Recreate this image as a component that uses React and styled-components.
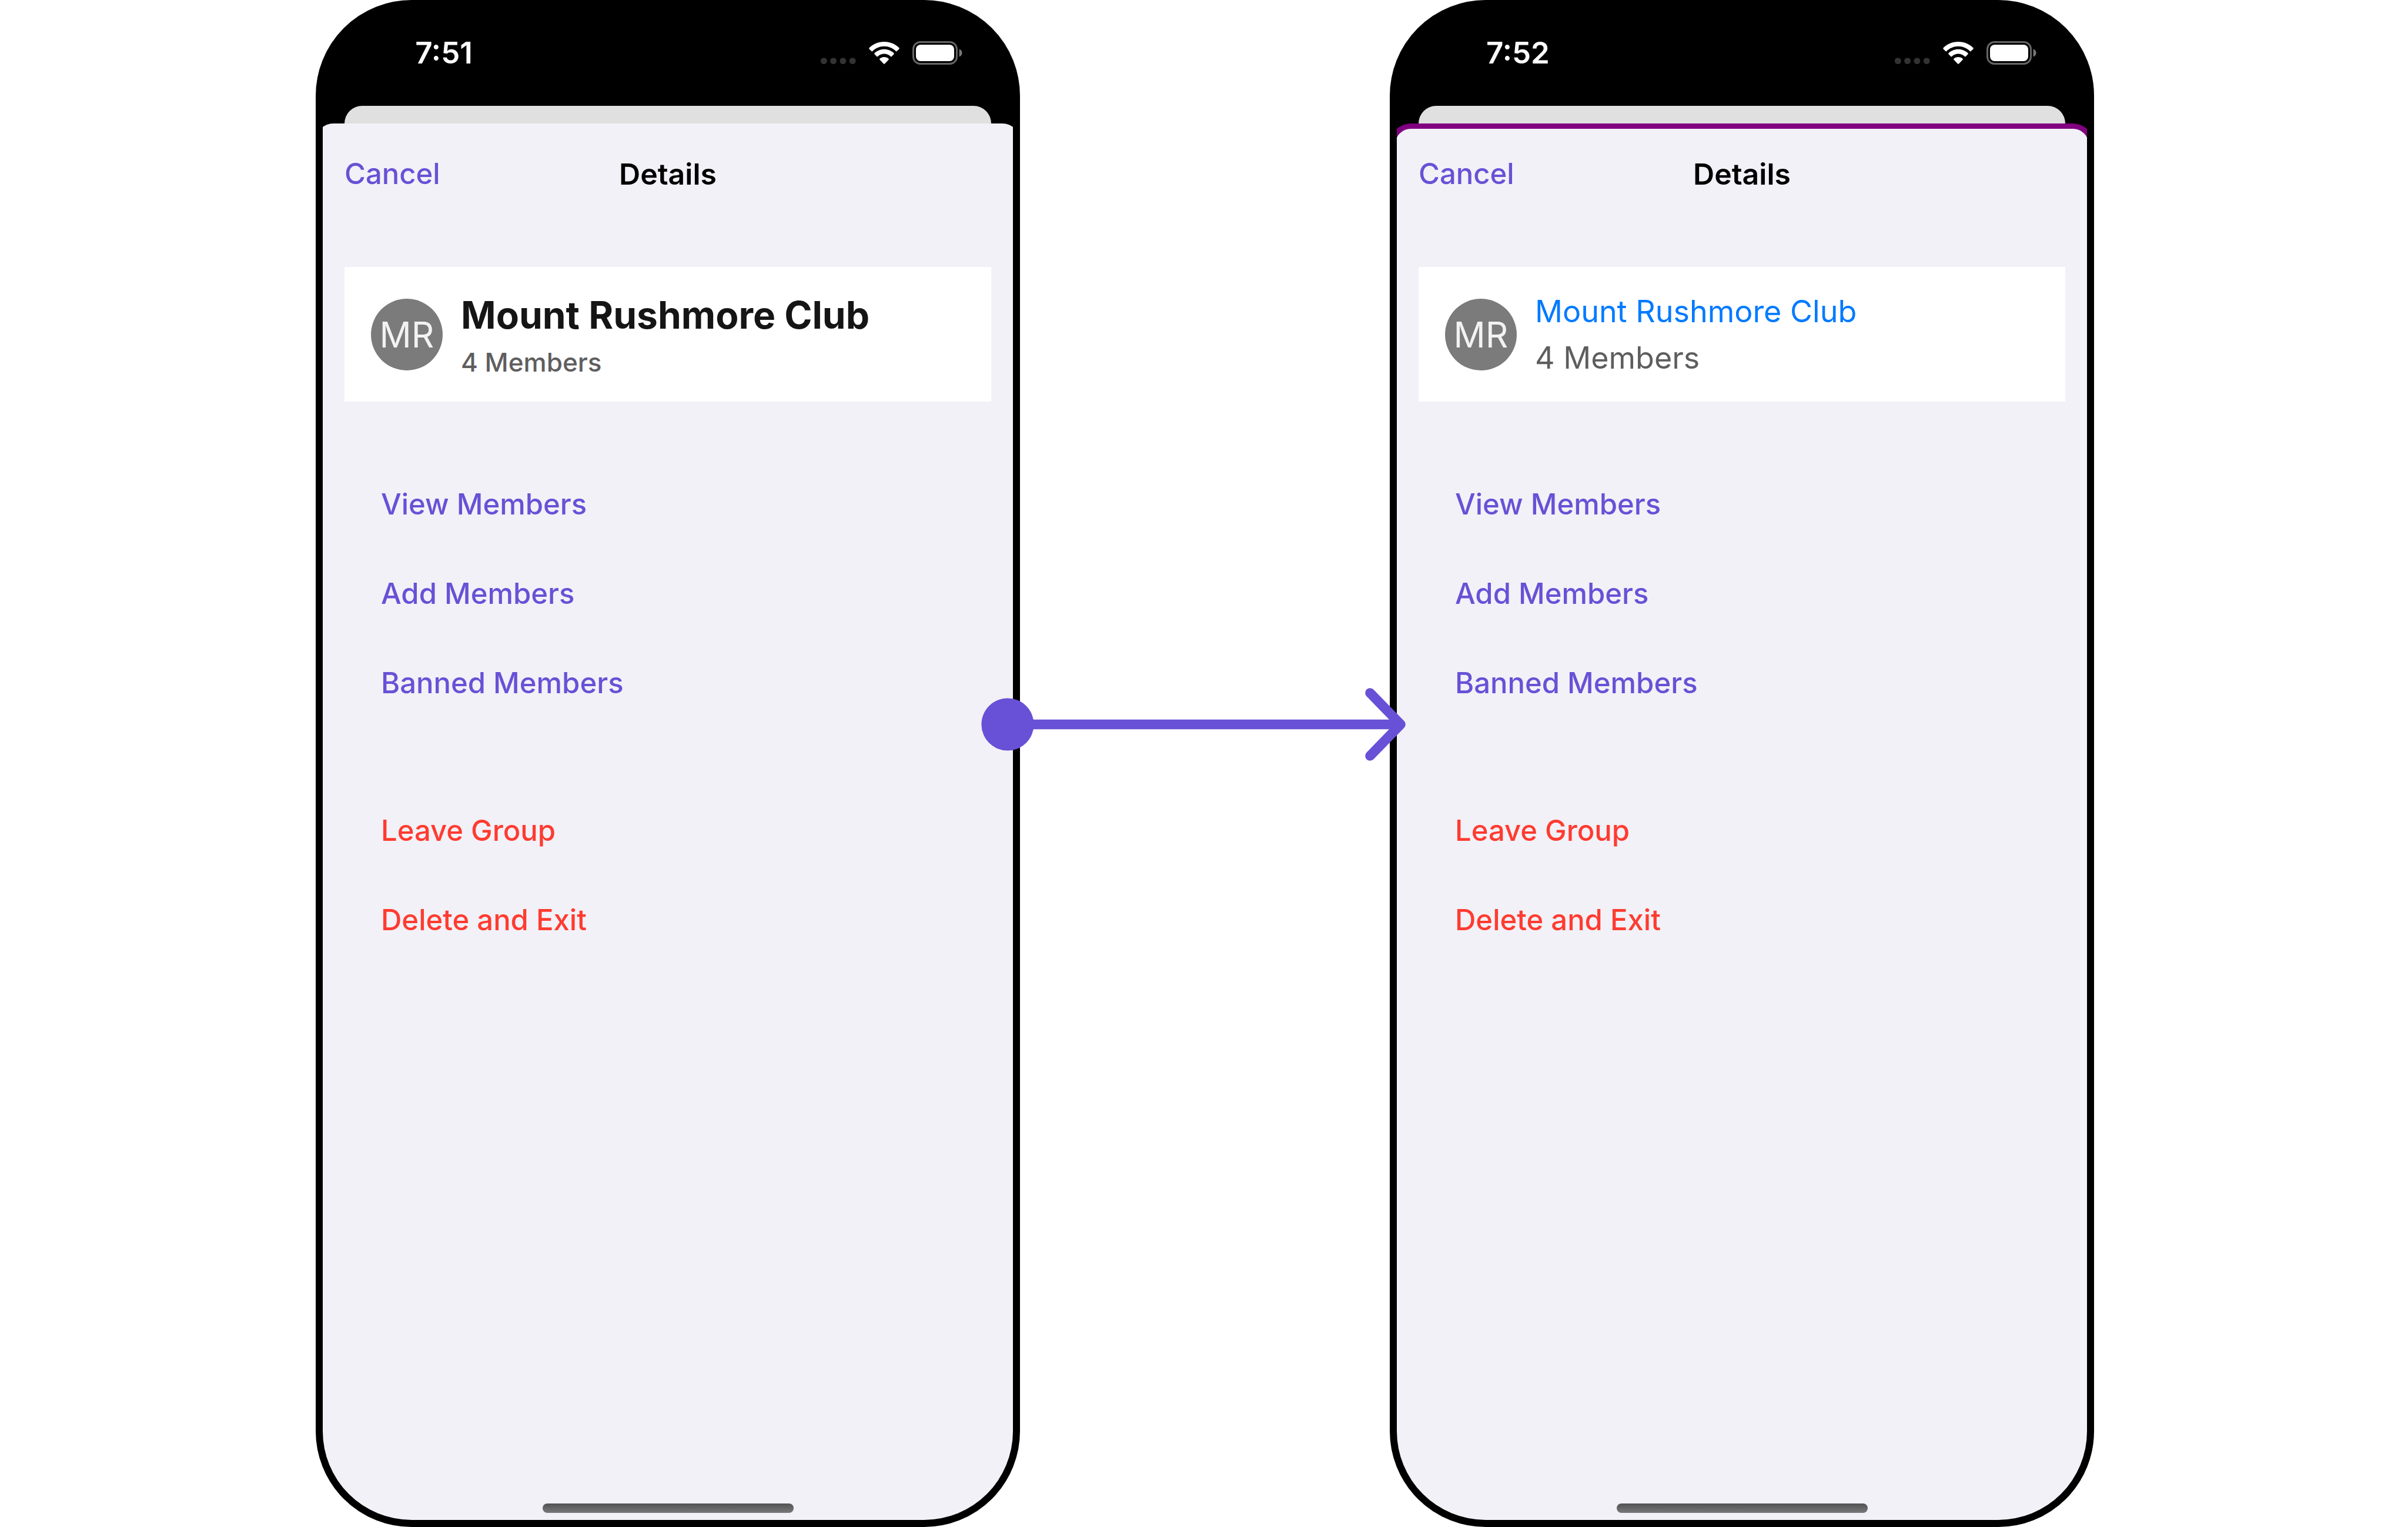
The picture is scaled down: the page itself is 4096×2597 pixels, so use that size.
import React from "react";
import styled, { createGlobalStyle } from "styled-components";

const color = {
  accent: "#6851d6",
  danger: "#ff3b30",
  link: "#007aff",
  sheet: "#f2f1f7",
  behind: "#e0e0e0",
  outline: "#800080",
};

const GlobalStyle = createGlobalStyle`
  *, *::before, *::after { box-sizing: border-box; }
  body {
    margin: 0;
    background: #fff;
    font-family: Inter, "Liberation Sans", sans-serif;
  }
  h1, h2, p, ul { margin: 0; padding: 0; }
`;

const Stage = styled.main`
  display: grid;
  grid-template-columns: minmax(0, 1fr) 629px minmax(0, 1fr);
  min-height: 100vh;
  padding: 0 534px 0 537px;
`;

const PhoneFrame = styled.section`
  display: flex;
  flex-direction: column;
  border: 12px solid #000;
  border-radius: 163px;
  background: #000;
  overflow: hidden;
`;

const StatusBar = styled.div`
  display: flex;
  align-items: center;
  justify-content: space-between;
  height: 168px;
  padding: 0 86px 13px 0;
`;

const Time = styled.time`
  width: 412px;
  text-align: center;
  color: #fff;
  font-size: 51px;
  font-weight: 600;
  line-height: 60px;
`;

const StatusIcons = styled.div`
  display: flex;
  align-items: center;
  gap: 22px;

  svg { display: block; }
`;

const BehindCard = styled.div`
  height: 30px;
  margin: 0 37px;
  border-radius: 30px 30px 0 0;
  background: ${color.behind};
`;

/* The sheet runs under the bezel on both sides, so only part of its corners shows. */
const Sheet = styled.div`
  flex: 1;
  display: flex;
  flex-direction: column;
  margin: 0 -12px;
  padding: 0 40px 12px;
  border: 9px solid ${(p) => (p.$outlined ? color.outline : color.sheet)};
  border-bottom: 0;
  border-radius: ${(p) => (p.$outlined ? "36px 36px 0 0" : "30px 30px 0 0")};
  background: ${color.sheet};
`;

const NavBar = styled.header`
  display: grid;
  grid-template-columns: 1fr auto 1fr;
  align-items: center;
  height: 154px;
  margin-bottom: 81px;
`;

const TextButton = styled.button`
  border: 0;
  padding: 0;
  background: none;
  font: inherit;
  font-size: 49px;
  font-weight: 500;
  line-height: 60px;
  text-align: left;
  cursor: pointer;
  color: ${(p) => (p.$danger ? color.danger : color.accent)};
`;

const NavTitle = styled.h1`
  font-size: 50px;
  font-weight: 600;
  line-height: 60px;
  color: #000;
`;

const GroupCard = styled.div`
  display: flex;
  align-items: center;
  gap: 31px;
  height: 229px;
  padding: 0 45px;
  background: #fff;
`;

const Avatar = styled.div`
  display: grid;
  place-items: center;
  flex: none;
  width: 122px;
  height: 122px;
  border-radius: 50%;
  background: #7b7b7b;
  color: #f2f2f2;
  font-size: 60px;
`;

const GroupName = styled.h2`
  font-size: ${(p) => (p.$plain ? 52 : 64)}px;
  font-weight: ${(p) => (p.$plain ? 400 : 700)};
  line-height: ${(p) => (p.$plain ? 79 : 94)}px;
  color: ${(p) => (p.$plain ? color.link : "#151515")};
  white-space: nowrap;
`;

const MemberCount = styled.p`
  font-size: ${(p) => (p.$plain ? 52 : 44)}px;
  font-weight: ${(p) => (p.$plain ? 400 : 500)};
  line-height: ${(p) => (p.$plain ? 79 : 66)}px;
  color: #5e5e5e;
`;

const ActionList = styled.ul`
  list-style: none;
  margin-top: 99px;
`;

const ActionItem = styled.li`
  display: flex;
  align-items: center;
  height: 152px;
  padding-left: 62px;
`;

const HomeIndicator = styled.div`
  width: 427px;
  height: 16px;
  margin: auto auto 0;
  border-radius: 8px;
  background: linear-gradient(#525254, #78787a);
`;

const Gap = styled.div`
  position: relative;
`;

const Connector = styled.svg`
  position: absolute;
  z-index: 1;
  top: 1170px;
  left: -66px;
  width: 722px;
  height: 124px;
`;

function SignalDots() {
  return (
    <svg width="60" height="38" viewBox="0 0 60 38" fill="#333" aria-hidden="true">
      {[0, 16.3, 32.6, 48.9].map((x) => (
        <rect key={x} x={x} y="27.5" width="10.6" height="10.4" rx="4.6" />
      ))}
    </svg>
  );
}

function WifiIcon() {
  return (
    <svg width="52" height="38" viewBox="0 0 52 38" fill="#fff" aria-hidden="true">
      <path d="M26 0C36 0 45 4 51.3 10.3Q52.3 11.3 51.3 12.4L47.6 16Q46.7 16.8 45.8 16C40.5 10.8 33.5 7.8 26 7.8C18.5 7.8 11.5 10.8 6.2 16Q5.3 16.8 4.4 16L.7 12.4Q-.3 11.3 .7 10.3C7 4 16 0 26 0Z" />
      <path d="M26 12.8C32.3 12.8 38 15.2 42.4 19.3Q43.3 20.3 42.4 21.3L38.7 25Q37.8 25.8 36.9 25C34 22.3 30.2 20.6 26 20.6C21.8 20.6 18 22.3 15.1 25Q14.2 25.8 13.3 25L9.6 21.3Q8.7 20.3 9.6 19.3C14 15.2 19.7 12.8 26 12.8Z" />
      <path d="M26 26C29 26 31.5 27 33.4 28.7Q34.4 29.8 33.4 30.8L26.9 37.4Q26 38.2 25.1 37.4L18.6 30.8Q17.6 29.8 18.6 28.7C20.5 27 23 26 26 26Z" />
    </svg>
  );
}

function BatteryIcon() {
  return (
    <svg width="85" height="40" viewBox="0 0 85 40" aria-hidden="true">
      <rect x="1.5" y="1.5" width="74" height="37" rx="12" fill="none" stroke="#666" strokeWidth="3" />
      <rect x="6" y="6" width="65" height="28" rx="8" fill="#fff" />
      <path d="M79.6 13.5C82.8 14.7 84.6 17 84.6 20S82.8 25.3 79.6 26.5Z" fill="#777" />
    </svg>
  );
}

const memberActions = ["View Members", "Add Members", "Banned Members"];
const exitActions = ["Leave Group", "Delete and Exit"];

function Actions({ items, danger }) {
  return (
    <ActionList>
      {items.map((label) => (
        <ActionItem key={label}>
          <TextButton type="button" $danger={danger}>{label}</TextButton>
        </ActionItem>
      ))}
    </ActionList>
  );
}

function Phone({ time, restyled }) {
  return (
    <PhoneFrame>
      <StatusBar>
        <Time>{time}</Time>
        <StatusIcons>
          <SignalDots />
          <WifiIcon />
          <BatteryIcon />
        </StatusIcons>
      </StatusBar>
      <BehindCard />
      <Sheet $outlined={restyled}>
        <NavBar>
          <TextButton type="button">Cancel</TextButton>
          <NavTitle>Details</NavTitle>
        </NavBar>
        <GroupCard>
          <Avatar>MR</Avatar>
          <div>
            <GroupName $plain={restyled}>Mount Rushmore Club</GroupName>
            <MemberCount $plain={restyled}>4 Members</MemberCount>
          </div>
        </GroupCard>
        <Actions items={memberActions} />
        <Actions items={exitActions} danger />
        <HomeIndicator />
      </Sheet>
    </PhoneFrame>
  );
}

export default function App() {
  return (
    <>
      <GlobalStyle />
      <Stage>
        <Phone time="7:51" />
        <Gap>
          <Connector viewBox="0 0 722 124" aria-hidden="true">
            <circle cx="45" cy="62" r="44.6" fill={color.accent} />
            <path
              d="M45 62H713M661.5 8.5L713.5 62L661.5 115.5"
              fill="none"
              stroke={color.accent}
              strokeWidth="16.6"
              strokeLinecap="round"
              strokeLinejoin="round"
            />
          </Connector>
        </Gap>
        <Phone time="7:52" restyled />
      </Stage>
    </>
  );
}
